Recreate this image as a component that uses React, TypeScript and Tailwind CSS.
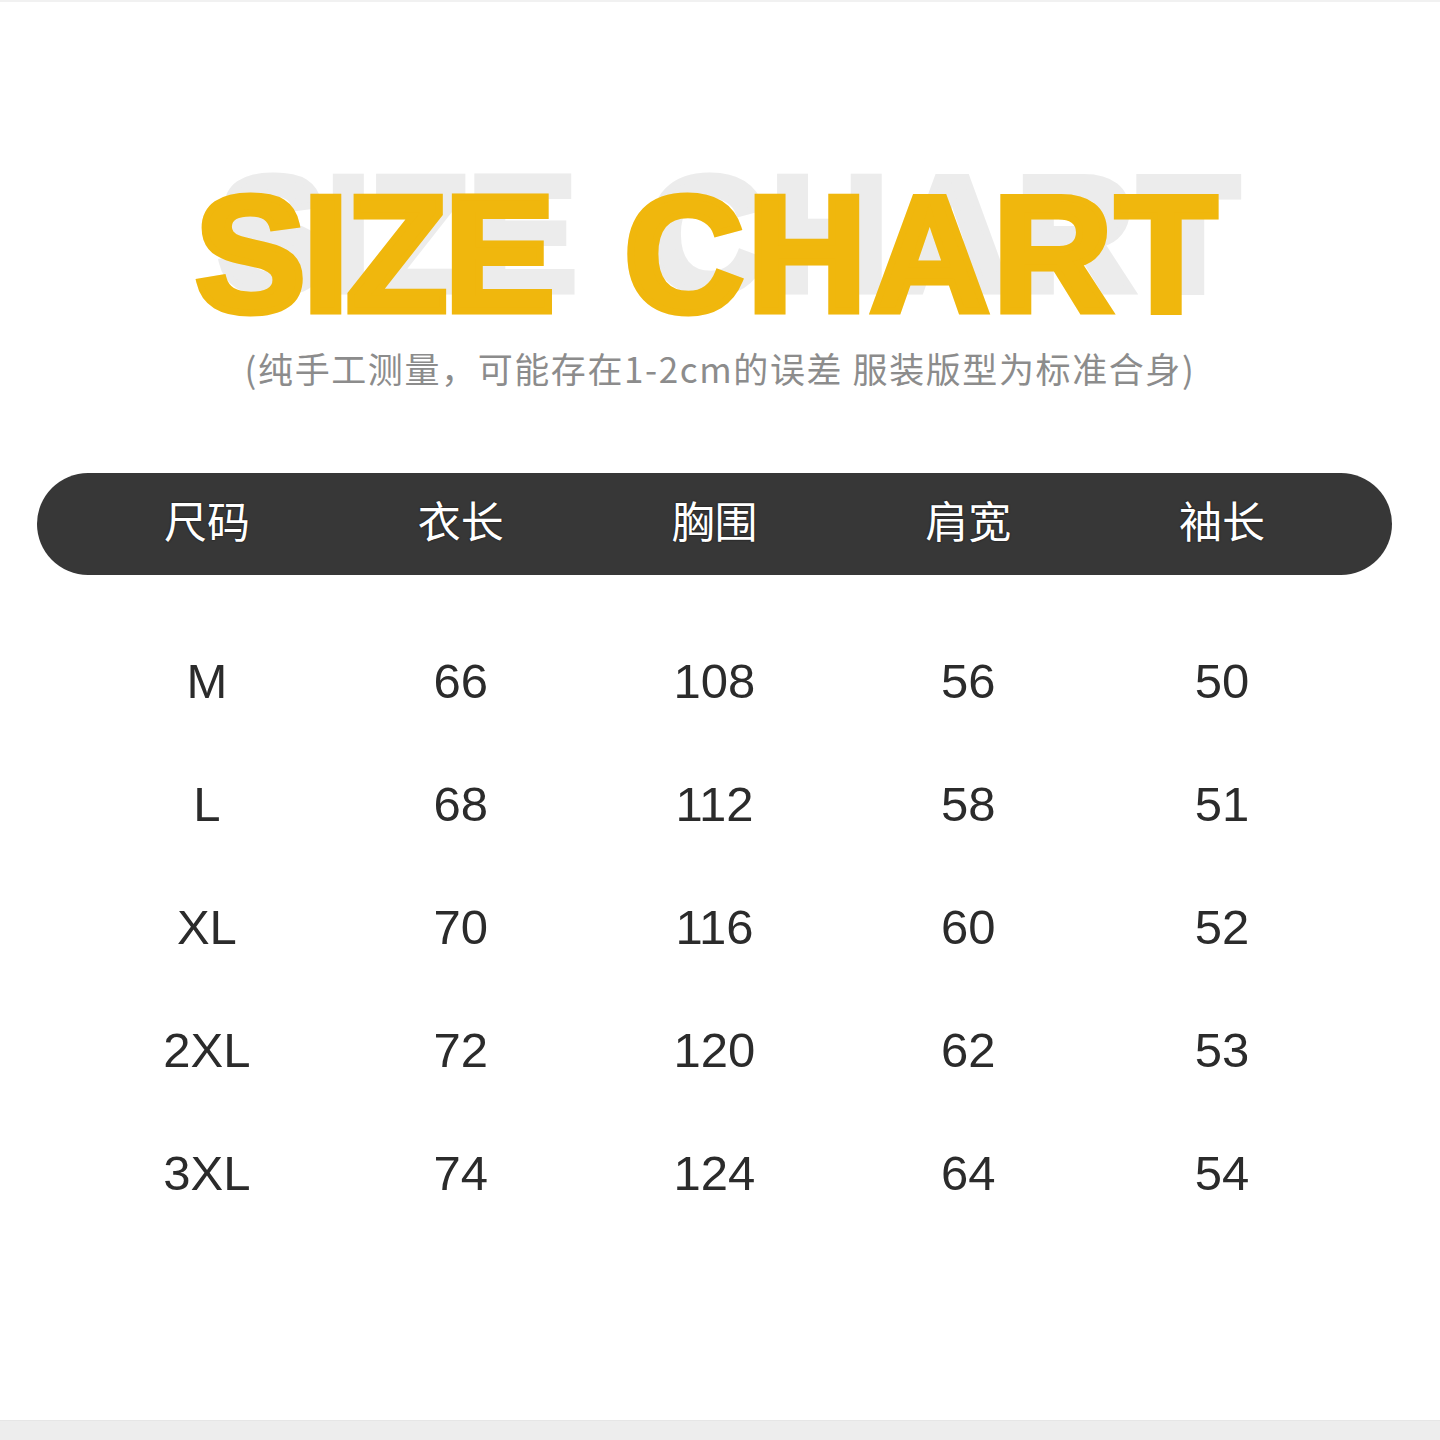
import React from "react";

const headers = ["尺码", "衣长", "胸围", "肩宽", "袖长"];

const rows = [
  ["M", "66", "108", "56", "50"],
  ["L", "68", "112", "58", "51"],
  ["XL", "70", "116", "60", "52"],
  ["2XL", "72", "120", "62", "53"],
  ["3XL", "74", "124", "64", "54"],
];

function Words() {
  return (
    <>
      <span className="tracking-[-3px]">SIZE</span>
      <span className="ml-[72px] tracking-[3px]">CHART</span>
    </>
  );
}

function SizeTitle() {
  return (
    <div className="relative h-[166px] w-full">
      {/* gray shadow copy behind */}
      <div className="absolute left-0 top-[-20px] w-full flex justify-center pl-[20px] text-[166px] leading-none font-bold text-[#ececec] [-webkit-text-stroke:7px_#ececec] whitespace-nowrap font-['Liberation_Sans',Arial,sans-serif]">
        <Words />
      </div>
      <div className="relative w-full flex justify-center pr-[25px] text-[166px] leading-none font-bold text-[#f0b70d] [-webkit-text-stroke:7px_#f0b70d] whitespace-nowrap font-['Liberation_Sans',Arial,sans-serif]">
        <Words />
      </div>
    </div>
  );
}

export default function App() {
  return (
    <div className="w-[1440px] h-[1440px] bg-white flex flex-col overflow-hidden">
      <div className="h-[2px] bg-[#f1f1f1]" />

      <div className="mt-[169px]">
        <SizeTitle />
      </div>

      <div className="mt-[11px] h-[40px] flex items-center justify-center text-[35px] leading-[40px] text-[#8c8c8c] tracking-[1.6px] font-['Noto_Sans_CJK_SC',sans-serif]">
        (纯手工测量，可能存在1-2cm的误差 服装版型为标准合身)
      </div>

      <div className="mt-[85px] ml-[37px] mr-[48px] h-[102px] rounded-full bg-[#373737] px-[43px] pb-[9px] grid grid-cols-5 items-center">
        {headers.map((h) => (
          <div
            key={h}
            className="text-center text-white text-[43px] leading-none [text-shadow:0_0_2px_rgba(0,0,0,0.8)] font-['Noto_Sans_CJK_SC',sans-serif]"
          >
            {h}
          </div>
        ))}
      </div>

      <div className="mt-[45px] ml-[37px] mr-[48px] px-[43px] flex flex-col">
        {rows.map((r) => (
          <div key={r[0]} className="h-[123px] grid grid-cols-5 items-center">
            {r.map((c, i) => (
              <div
                key={i}
                className="text-center text-[49px] leading-none text-[#2b2b2b] font-['Liberation_Sans',Arial,sans-serif]"
              >
                {c}
              </div>
            ))}
          </div>
        ))}
      </div>

      <div className="mt-auto h-[20px] bg-[#ededed] border-t border-[#e6e6e6]" />
    </div>
  );
}
